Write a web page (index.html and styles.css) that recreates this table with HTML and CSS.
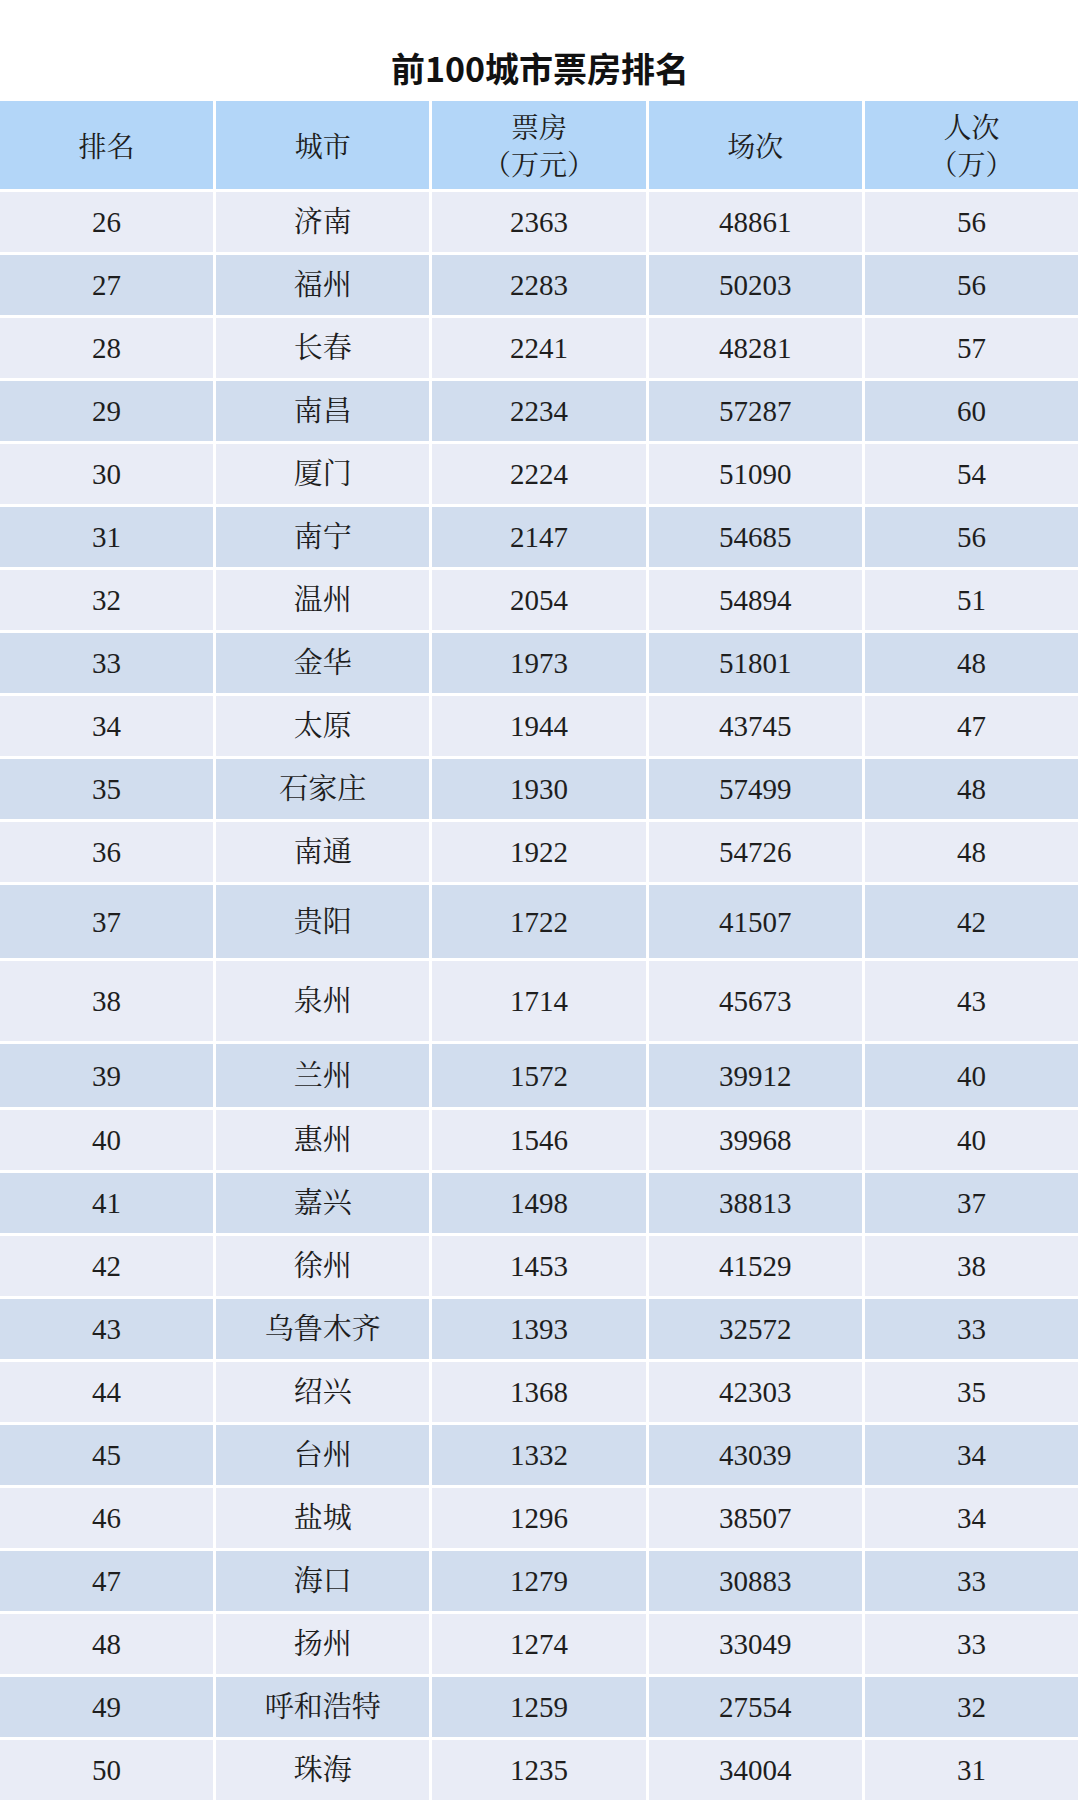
FILE: index.html
```html
<!DOCTYPE html>
<html lang="zh-CN">
<head>
<meta charset="utf-8">
<title>前100城市票房排名</title>
<link rel="stylesheet" href="styles.css">
</head>
<body>
<div class="page">
  <h1 class="title">前100城市票房排名</h1>
  <div class="table">
    <div class="row head">
      <div class="cell">排名</div>
      <div class="cell">城市</div>
      <div class="cell"><span>票房</span><span class="paren">（万元）</span></div>
      <div class="cell">场次</div>
      <div class="cell"><span>人次</span><span class="paren">（万）</span></div>
    </div>
    <div class="row"><div class="cell">26</div><div class="cell">济南</div><div class="cell">2363</div><div class="cell">48861</div><div class="cell">56</div></div>
    <div class="row alt"><div class="cell">27</div><div class="cell">福州</div><div class="cell">2283</div><div class="cell">50203</div><div class="cell">56</div></div>
    <div class="row"><div class="cell">28</div><div class="cell">长春</div><div class="cell">2241</div><div class="cell">48281</div><div class="cell">57</div></div>
    <div class="row alt"><div class="cell">29</div><div class="cell">南昌</div><div class="cell">2234</div><div class="cell">57287</div><div class="cell">60</div></div>
    <div class="row"><div class="cell">30</div><div class="cell">厦门</div><div class="cell">2224</div><div class="cell">51090</div><div class="cell">54</div></div>
    <div class="row alt"><div class="cell">31</div><div class="cell">南宁</div><div class="cell">2147</div><div class="cell">54685</div><div class="cell">56</div></div>
    <div class="row"><div class="cell">32</div><div class="cell">温州</div><div class="cell">2054</div><div class="cell">54894</div><div class="cell">51</div></div>
    <div class="row alt"><div class="cell">33</div><div class="cell">金华</div><div class="cell">1973</div><div class="cell">51801</div><div class="cell">48</div></div>
    <div class="row"><div class="cell">34</div><div class="cell">太原</div><div class="cell">1944</div><div class="cell">43745</div><div class="cell">47</div></div>
    <div class="row alt"><div class="cell">35</div><div class="cell">石家庄</div><div class="cell">1930</div><div class="cell">57499</div><div class="cell">48</div></div>
    <div class="row"><div class="cell">36</div><div class="cell">南通</div><div class="cell">1922</div><div class="cell">54726</div><div class="cell">48</div></div>
    <div class="row alt h73"><div class="cell">37</div><div class="cell">贵阳</div><div class="cell">1722</div><div class="cell">41507</div><div class="cell">42</div></div>
    <div class="row h80"><div class="cell">38</div><div class="cell">泉州</div><div class="cell">1714</div><div class="cell">45673</div><div class="cell">43</div></div>
    <div class="row alt h63"><div class="cell">39</div><div class="cell">兰州</div><div class="cell">1572</div><div class="cell">39912</div><div class="cell">40</div></div>
    <div class="row"><div class="cell">40</div><div class="cell">惠州</div><div class="cell">1546</div><div class="cell">39968</div><div class="cell">40</div></div>
    <div class="row alt"><div class="cell">41</div><div class="cell">嘉兴</div><div class="cell">1498</div><div class="cell">38813</div><div class="cell">37</div></div>
    <div class="row"><div class="cell">42</div><div class="cell">徐州</div><div class="cell">1453</div><div class="cell">41529</div><div class="cell">38</div></div>
    <div class="row alt"><div class="cell">43</div><div class="cell">乌鲁木齐</div><div class="cell">1393</div><div class="cell">32572</div><div class="cell">33</div></div>
    <div class="row"><div class="cell">44</div><div class="cell">绍兴</div><div class="cell">1368</div><div class="cell">42303</div><div class="cell">35</div></div>
    <div class="row alt"><div class="cell">45</div><div class="cell">台州</div><div class="cell">1332</div><div class="cell">43039</div><div class="cell">34</div></div>
    <div class="row"><div class="cell">46</div><div class="cell">盐城</div><div class="cell">1296</div><div class="cell">38507</div><div class="cell">34</div></div>
    <div class="row alt"><div class="cell">47</div><div class="cell">海口</div><div class="cell">1279</div><div class="cell">30883</div><div class="cell">33</div></div>
    <div class="row"><div class="cell">48</div><div class="cell">扬州</div><div class="cell">1274</div><div class="cell">33049</div><div class="cell">33</div></div>
    <div class="row alt"><div class="cell">49</div><div class="cell">呼和浩特</div><div class="cell">1259</div><div class="cell">27554</div><div class="cell">32</div></div>
    <div class="row"><div class="cell">50</div><div class="cell">珠海</div><div class="cell">1235</div><div class="cell">34004</div><div class="cell">31</div></div>
  </div>
</div>
</body>
</html>
```
FILE: styles.css
```css
html, body {
  margin: 0;
  padding: 0;
  background: #ffffff;
}

.page {
  width: 1080px;
}

.title {
  margin: 0 0 13px 0;
  padding-top: 48px;
  height: 40px;
  line-height: 40px;
  text-align: center;
  font-family: "Noto Sans CJK SC", "Noto Sans", sans-serif;
  font-weight: 700;
  font-size: 34px;
  color: #111111;
}

.table {
  width: 1078px;
  display: flex;
  flex-direction: column;
  gap: 3px;
}

.row {
  display: grid;
  grid-template-columns: repeat(5, 1fr);
  column-gap: 3px;
  height: 60px;
}

.row.h73 { height: 73px; }
.row.h80 { height: 80px; }
.row.h63 { height: 63px; }

.row.head {
  height: 88px;
}

.cell {
  display: flex;
  flex-direction: column;
  align-items: center;
  justify-content: center;
  background: #e9ecf6;
  font-family: "Liberation Serif", "Noto Serif CJK SC", "Noto Sans CJK SC", serif;
  font-size: 29px;
  color: #1e1e1e;
  line-height: 32px;
}

.row.alt .cell {
  background: #d1ddee;
}

.row.head .cell {
  background: #b3d6f8;
  font-size: 28px;
  line-height: 37px;
  padding-top: 4px;
}

.paren {
  display: block;
}
```
